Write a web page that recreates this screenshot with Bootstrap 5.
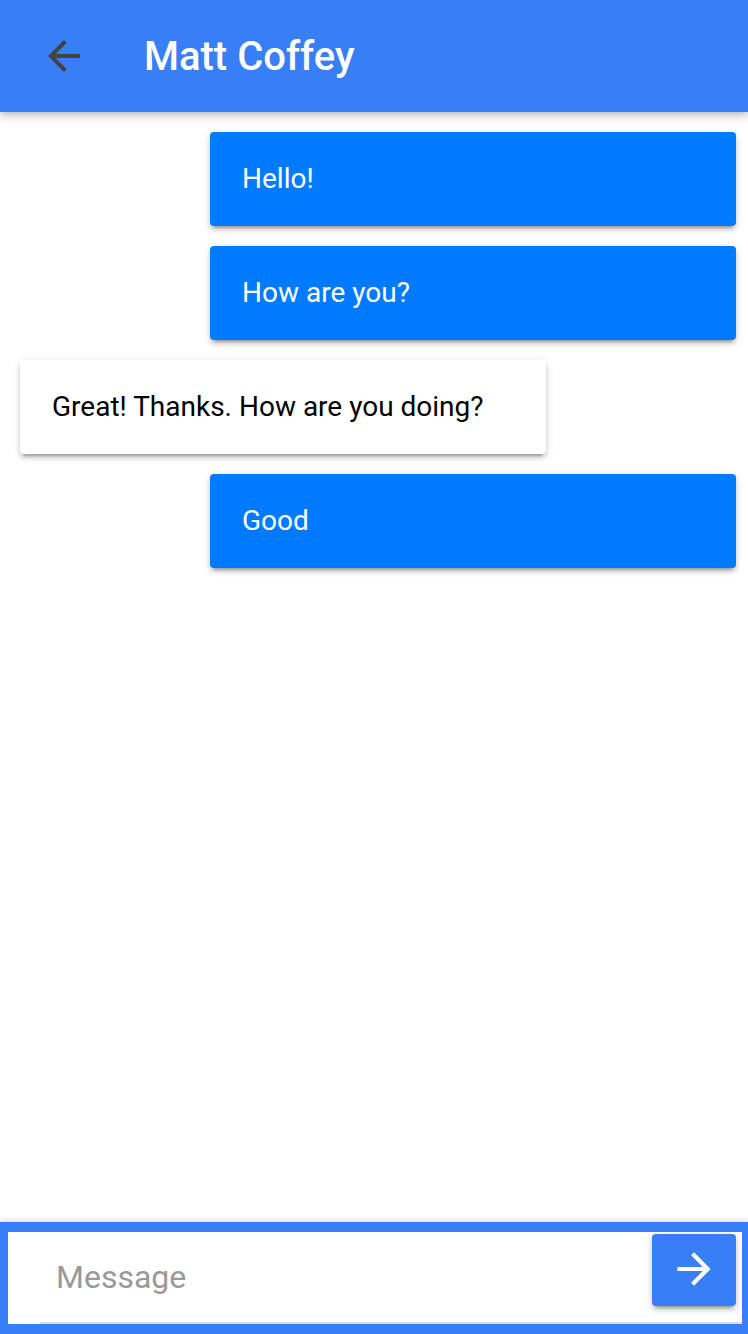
<!DOCTYPE html>
<html lang="en">
<head>
<meta charset="utf-8">
<meta name="viewport" content="width=device-width, initial-scale=1">
<title>Matt Coffey</title>
<link href="https://cdn.jsdelivr.net/npm/bootstrap@5.3.0/dist/css/bootstrap.min.css" rel="stylesheet">
<style>
  :root { --brand: #387ef5; --bubble: #007aff; }
  body { font-family: Roboto, "Liberation Sans", sans-serif; background: #fff; }
  .toolbar { background: var(--brand); height: 112px; padding: 0 40px; box-shadow: 0 2px 10px rgba(0,0,0,.35); }
  .back-btn { color: #424242; width: 48px; height: 48px; }
  .toolbar h1 { font-size: 40px; line-height: 48px; padding-top: 2px; font-weight: 500; color: #fff; margin-left: 56px; }
  .messages { padding: 20px 12px 20px 20px; gap: 20px; }
  .bubble { width: calc(75% - 11px); padding: 26px 32px; font-size: 28px; line-height: 42px; border: 0; border-radius: 4px; color: #000;
    box-shadow: 0 4px 4px 0 rgba(0,0,0,.14), 0 6px 2px -4px rgba(0,0,0,.2), 0 2px 10px 0 rgba(0,0,0,.12); }
  .bubble.sent { background: var(--bubble); color: #fff; }
  .composer { background: var(--brand); padding: 10px 6px 10px 8px; box-shadow: 0 -1px 5px rgba(0,0,0,.16); }
  .composer-field { background: #fff; height: 92px; padding-left: 32px; }
  .composer-line { border-bottom: 2px solid #dedede; padding: 2px 6px 0 16px; }
  .composer-line .form-control { font-size: 32px; line-height: 40px; padding: 0; height: 86px; color: #000; }
  .composer-line .form-control::placeholder { color: #999; }
  .send-btn { width: 84px; height: 72px; padding: 0 0 2px; background: var(--brand); color: #fff; border-radius: 4px;
    box-shadow: 0 4px 4px 0 rgba(0,0,0,.14), 0 6px 2px -4px rgba(0,0,0,.2), 0 2px 10px 0 rgba(0,0,0,.12); }
  .send-btn:hover { background: #3072e0; color: #fff; }
</style>
</head>
<body class="d-flex flex-column min-vh-100">
  <header class="toolbar d-flex align-items-center sticky-top">
    <button type="button" class="btn back-btn p-0 border-0 d-flex flex-shrink-0" aria-label="Back">
      <svg width="48" height="48" viewBox="0 0 24 24" fill="currentColor" aria-hidden="true"><path d="M20 11H7.8l5.6-5.6L12 4l-8 8 8 8 1.400-1.400L7.800 13H20z"/></svg>
    </button>
    <h1 class="mb-0">Matt Coffey</h1>
  </header>

  <main class="messages d-flex flex-column flex-grow-1">
    <div class="card bubble sent align-self-end">Hello!</div>
    <div class="card bubble sent align-self-end">How are you?</div>
    <div class="card bubble align-self-start">Great! Thanks. How are you doing?</div>
    <div class="card bubble sent align-self-end">Good</div>
  </main>

  <footer class="composer sticky-bottom">
    <form class="composer-field d-flex" onsubmit="return false">
      <div class="composer-line d-flex flex-grow-1 align-items-start">
        <input id="message" type="text" class="form-control border-0 shadow-none bg-transparent rounded-0" placeholder="Message" aria-label="Message">
        <button type="submit" class="btn send-btn border-0 d-flex align-items-center justify-content-center flex-shrink-0" aria-label="Send">
          <svg width="50" height="50" viewBox="0 0 24 24" fill="currentColor" aria-hidden="true"><path d="M4 13h12.200l-5.600 5.600L12 20l8-8-8-8-1.400 1.400 5.600 5.600H4z"/></svg>
        </button>
      </div>
    </form>
  </footer>
<script src="https://cdn.jsdelivr.net/npm/bootstrap@5.3.0/dist/js/bootstrap.bundle.min.js"></script>
</body>
</html>
